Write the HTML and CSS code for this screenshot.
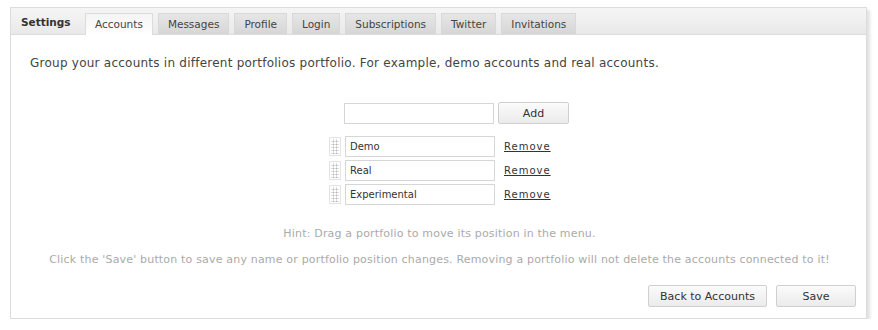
FILE: index.html
```html
<!DOCTYPE html>
<html lang="en">
<head>
  <meta charset="UTF-8">
  <title>Settings</title>
  <link rel="stylesheet" href="styles.css">
</head>
<body>
  <div class="panel">
    <div class="tabbar">
      <span class="title">Settings</span>
      <ul class="tabs">
        <li class="active">Accounts</li>
        <li>Messages</li>
        <li>Profile</li>
        <li>Login</li>
        <li>Subscriptions</li>
        <li>Twitter</li>
        <li>Invitations</li>
      </ul>
    </div>
    <div class="content">
      <p class="intro">Group your accounts in different portfolios portfolio. For example, demo accounts and real accounts.</p>

      <div class="portfolios">
        <div class="row add-row">
          <input type="text" class="field">
          <button class="btn add">Add</button>
        </div>
        <div class="row">
          <span class="handle"></span>
          <input type="text" class="field" value="Demo">
          <a href="#" class="remove">Remove</a>
        </div>
        <div class="row">
          <span class="handle"></span>
          <input type="text" class="field" value="Real">
          <a href="#" class="remove">Remove</a>
        </div>
        <div class="row">
          <span class="handle"></span>
          <input type="text" class="field" value="Experimental">
          <a href="#" class="remove">Remove</a>
        </div>
      </div>

      <p class="hint first">Hint: Drag a portfolio to move its position in the menu.</p>
      <p class="hint">Click the 'Save' button to save any name or portfolio position changes. Removing a portfolio will not delete the accounts connected to it!</p>

      <div class="actions">
        <button class="btn back">Back to Accounts</button>
        <button class="btn save">Save</button>
      </div>
    </div>
  </div>
</body>
</html>
```

FILE: styles.css
```css
body {
  margin: 0;
  padding: 7px 0 0 10px;
  background: #fff;
  font-family: "DejaVu Sans", Verdana, sans-serif;
  color: #333;
}
.panel {
  width: 857px;
  height: 312px;
  border: 1px solid #dcdcdc;
  box-sizing: border-box;
  box-shadow: 3px 3px 3px #e2e2e2;
  display: flex;
  flex-direction: column;
}
.tabbar {
  height: 27px;
  display: flex;
  align-items: flex-end;
  background: linear-gradient(#f5f5f5, #e9e9e9);
  border-bottom: 1px solid #dcdcdc;
  box-sizing: border-box;
}
.title {
  font-weight: bold;
  font-size: 10.5px;
  color: #333;
  width: 74px;
  padding-left: 10px;
  align-self: center;
  margin-top: 2px;
  box-sizing: border-box;
}
.tabs {
  list-style: none;
  display: flex;
  gap: 5px;
  margin: 0 0 -1px;
  padding: 0;
}
.tabs li {
  font-size: 10.5px;
  color: #444;
  height: 21px;
  line-height: 21px;
  padding: 0 9px;
  background: linear-gradient(#e6e6e6, #d6d6d6);
  border: 1px solid #d8d8d8;
  border-bottom: none;
  box-sizing: border-box;
  margin-bottom: 1px;
}
.tabs li.active {
  background: linear-gradient(#f4f4f4, #fff);
  height: 22px;
  margin-bottom: 0;
  border-color: #dcdcdc;
}
.content {
  flex: 1;
  padding: 0 17px 0 19px;
  display: flex;
  flex-direction: column;
}
.intro {
  font-size: 12px;
  letter-spacing: 0.24px;
  color: #444;
  margin: 21px 0 0;
}
.portfolios {
  margin: 31px 0 0 299px;
}
.row {
  display: flex;
  align-items: center;
  height: 24px;
}
.add-row {
  margin-left: 15px;
  margin-bottom: 9px;
}
.handle {
  width: 12px;
  height: 19px;
  border: 1px solid #e4e4e4;
  box-sizing: border-box;
  margin-right: 4px;
  background-image: radial-gradient(circle, #b8b8b8 0.9px, transparent 1.1px);
  background-size: 3px 3px;
  background-position: 2px 2px;
  background-repeat: repeat;
  background-clip: content-box;
  padding: 1px 1px;
}
.field {
  width: 150px;
  height: 21px;
  border: 1px solid #d6d6d6;
  box-sizing: border-box;
  font-family: "DejaVu Sans", Verdana, sans-serif;
  font-size: 10px;
  color: #333;
  padding: 0 4px;
  margin: 0;
}
.remove {
  font-size: 10px;
  color: #333;
  letter-spacing: 1px;
  margin-left: 9px;
}
.btn {
  font-family: "DejaVu Sans", Verdana, sans-serif;
  font-size: 11px;
  color: #333;
  height: 22px;
  border: 1px solid #d0d0d0;
  border-radius: 2px;
  background: linear-gradient(#fbfbfb, #ebebeb);
  padding: 0;
}
.add {
  width: 71px;
  margin-left: 4px;
}
.hint {
  font-size: 11px;
  letter-spacing: 0.18px;
  color: #aaa;
  text-align: center;
  margin: 13px 0 0;
}
.hint.first {
  margin-top: 21px;
}
.actions {
  margin: auto -7px 11px 0;
  display: flex;
  justify-content: flex-end;
  gap: 9px;
}
.back {
  width: 119px;
}
.save {
  width: 80px;
}
```
